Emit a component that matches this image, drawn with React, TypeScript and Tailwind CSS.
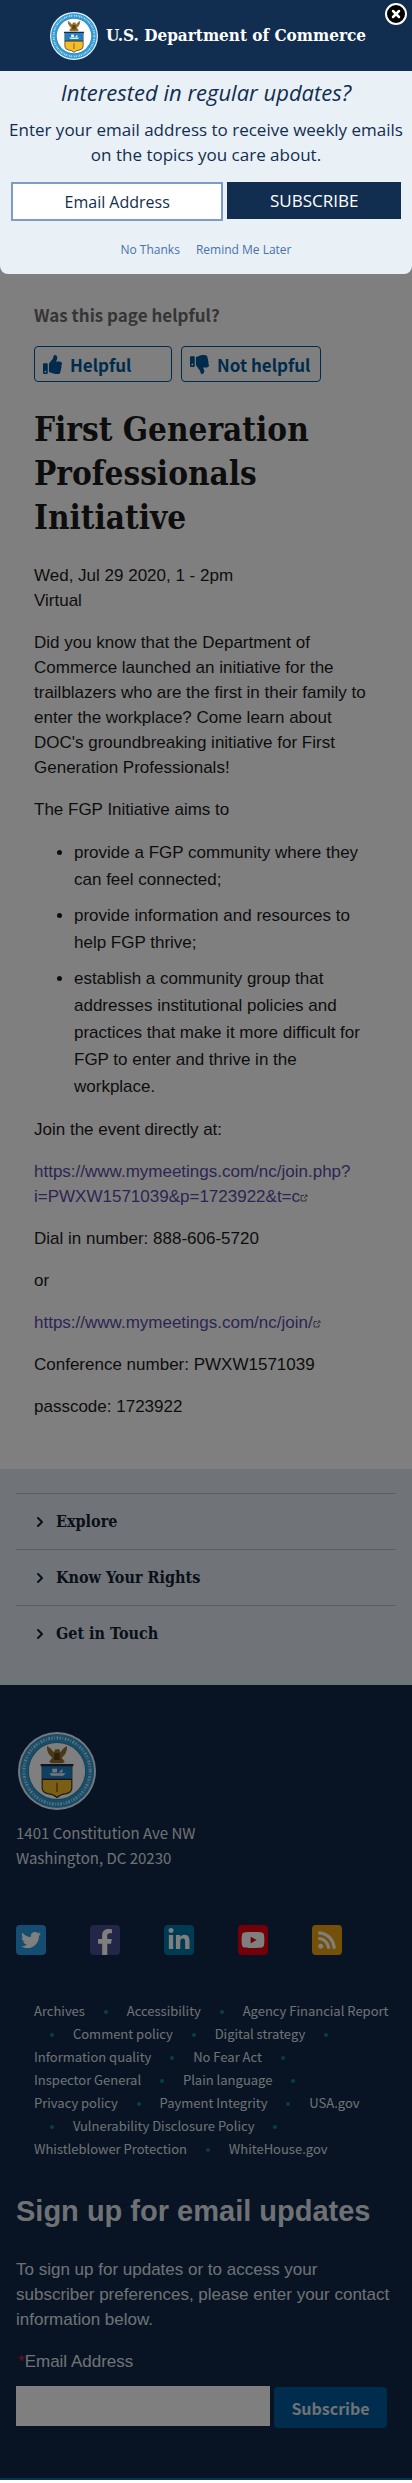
import type { ReactNode } from "react";
import { FaFacebookF, FaLinkedinIn, FaTwitter, FaYoutube, FaRss, FaThumbsUp, FaThumbsDown } from "react-icons/fa";
import { ChevronRight, X } from "lucide-react";

function Seal({ className }: { className: string }) {
  return (
    <svg viewBox="0 0 100 100" className={className} role="img" aria-label="Department of Commerce seal">
      <circle cx="50" cy="50" r="50" fill="#e6f2fb" />
      <circle cx="50" cy="50" r="47.5" fill="#2f9bd2" />
      <circle cx="50" cy="50" r="42.5" fill="none" stroke="#b4dcf2" strokeWidth="4" strokeDasharray="1.8 1.8 1.1 2 2.4 1.6" />
      <circle cx="50" cy="50" r="37" fill="#2b7fb4" />
      <circle cx="50" cy="50" r="36" fill="#ffffff" />
      <path d="M37 18 Q42 20 46 26 L48 22 L53 22 L54 26 Q58 20 63 18 Q63 26 59 30 L56 33 L60 38 L57 40 H43 L40 38 L44 33 L41 30 Q37 26 37 18 Z" fill="#94702c" />
      <path d="M47 27 H53 L54 36 H46 Z" fill="#5d4216" />
      <path d="M31 43 H69 V72 Q69 77 62 79 Q54 80 50 84 Q46 80 38 79 Q31 77 31 72 Z" fill="#f3bd27" stroke="#3b331c" strokeWidth="1.5" />
      <path d="M31 43 H69 V60 H31 Z" fill="#1f7fc4" />
      <path d="M29 41 H71 V44 H29 Z M31 59.5 H69 V61.5 H31 Z" fill="#1d2a3c" />
      <path d="M40 53 H61 L58 56 H43 Z M44 52 V47 H50 V52 Z M52 52 L57 47 V52 Z" fill="#e8f1f5" />
      <path d="M49 65 H51 V77 H49 Z" fill="#8d5f14" />
    </svg>
  );
}

const footerLinks = [
  "Archives",
  "Accessibility",
  "Agency Financial Report",
  "Comment policy",
  "Digital strategy",
  "Information quality",
  "No Fear Act",
  "Inspector General",
  "Plain language",
  "Privacy policy",
  "Payment Integrity",
  "USA.gov",
  "Vulnerability Disclosure Policy",
  "Whistleblower Protection",
  "WhiteHouse.gov",
];

const sections = ["Explore", "Know Your Rights", "Get in Touch"];

const social: { name: string; color: string; icon: ReactNode }[] = [
  { name: "Twitter", color: "bg-[#2a9be0]", icon: <FaTwitter className="size-5" /> },
  { name: "Facebook", color: "bg-[#454f90]", icon: <FaFacebookF className="mt-1 size-[26px]" /> },
  { name: "LinkedIn", color: "bg-[#0077a8]", icon: <FaLinkedinIn className="size-6" /> },
  { name: "YouTube", color: "bg-[#e60012]", icon: <FaYoutube className="size-6" /> },
  { name: "RSS", color: "bg-[#e8a010]", icon: <FaRss className="size-5" /> },
];

function MeetingLink({ children }: { children: ReactNode }) {
  return (
    <a href="#join" className="break-words text-[#5c4ba8]">
      {children}
      <svg viewBox="0 0 8 8" className="inline-block size-2 align-baseline" aria-hidden="true">
        <path d="M4 1.5 H1 V7 H6 V4.5 M5 1 H7 V3 M7 1 L4 4" fill="none" stroke="#66666e" strokeWidth="1" />
      </svg>
    </a>
  );
}

function UpdatesDialog() {
  return (
    <section
      role="dialog"
      aria-label="Email updates"
      className="absolute inset-x-0 top-0 overflow-hidden rounded-b-lg bg-[#e9f0f6] text-center font-['Open_Sans',sans-serif] text-[#112e51]"
    >
      <header className="flex h-[71px] items-center justify-center gap-2 bg-[#112e51] pl-1">
        <Seal className="size-12" />
        <span className="font-['DejaVu_Serif_Condensed','DejaVu_Serif',serif] text-[17px] font-bold text-white">
          U.S. Department of Commerce
        </span>
      </header>
      <button
        type="button"
        aria-label="Close"
        className="absolute top-[3px] right-[5px] grid size-[22px] place-items-center rounded-full border-2 border-white bg-black text-white"
      >
        <X className="size-3" strokeWidth={5} />
      </button>
      <h2 className="mt-[7px] text-[22px] leading-7 italic">Interested in regular updates?</h2>
      <p className="mt-[11px] px-1 text-[17px] leading-[25px]">
        Enter your email address to receive weekly emails on the topics you care about.
      </p>
      <form className="mt-[15px] flex gap-1 px-[11px]" onSubmit={(e) => e.preventDefault()}>
        <input
          type="email"
          aria-label="Email Address"
          placeholder="Email Address"
          className="h-[39px] w-0 grow-6 border-2 border-[#7d9cc8] bg-white text-center text-base placeholder:text-[#112e51]"
        />
        <button type="submit" className="h-[37px] w-0 grow-5 bg-[#112e51] text-[17px] text-white">
          SUBSCRIBE
        </button>
      </form>
      <p className="mt-5 flex justify-center gap-4 pb-[15px] text-xs leading-[18px] text-[#4773aa]">
        <a href="#no">No Thanks</a>
        <a href="#later">Remind Me Later</a>
      </p>
    </section>
  );
}

export default function App() {
  return (
    <div className="relative bg-white font-['Liberation_Sans',sans-serif] text-[17px] leading-[25px] text-[#1b1b1b]">
      <main className="px-[34px] pt-[302px] pb-[50px]">
        <p className="font-['Noto_Sans_CJK_SC',sans-serif] text-[17px] font-bold text-[#6b6b6b]">
          Was this page helpful?
        </p>
        <div className="mt-[19px] flex gap-[9px] font-['Noto_Sans_CJK_SC',sans-serif] text-[17px] font-bold text-[#00569a]">
          <button type="button" className="flex h-9 w-[138px] items-center gap-2 rounded-sm border border-[#00569a] px-2">
            <FaThumbsUp className="size-[19px]" />
            Helpful
          </button>
          <button type="button" className="flex h-9 w-[140px] items-center gap-2 rounded-sm border border-[#00569a] px-2 whitespace-nowrap">
            <FaThumbsDown className="size-[19px]" />
            Not helpful
          </button>
        </div>
        <h1 className="mt-[26px] font-['DejaVu_Serif_Condensed','DejaVu_Serif',serif] text-[33px] leading-[44px] font-bold">
          First Generation Professionals Initiative
        </h1>
        <p className="mt-[23px]">
          Wed, Jul 29 2020, 1 - 2pm
          <br />
          Virtual
        </p>
        <p className="mt-[17px]">
          Did you know that the Department of Commerce launched an initiative for the trailblazers who are the first in
          their family to enter the workplace? Come learn about DOC's groundbreaking initiative for First Generation
          Professionals!
        </p>
        <p className="mt-[17px]">The FGP Initiative aims to</p>
        <ul className="mt-[17px] list-disc space-y-[9px] pl-10 leading-[27px]">
          <li>provide a FGP community where they can feel connected;</li>
          <li>provide information and resources to help FGP thrive;</li>
          <li>
            establish a community group that addresses institutional policies and practices that make it more difficult
            for FGP to enter and thrive in the workplace.
          </li>
        </ul>
        <div className="mt-[17px] space-y-[17px]">
          <p>Join the event directly at:</p>
          <p>
            <MeetingLink>https://www.mymeetings.com/nc/join.php?i=PWXW1571039&amp;p=1723922&amp;t=c</MeetingLink>
          </p>
          <p>Dial in number: 888-606-5720</p>
          <p>or</p>
          <p>
            <MeetingLink>https://www.mymeetings.com/nc/join/</MeetingLink>
          </p>
          <p>Conference number: PWXW1571039</p>
          <p>passcode: 1723922</p>
        </div>
      </main>

      <nav aria-label="Site sections" className="border-b-[6px] border-[#d8eaea] bg-[#e1e8f2] px-4 pt-6 pb-[18px]">
        {sections.map((name) => (
          <a
            key={name}
            href="#section"
            className="flex h-14 items-center gap-2 border-t border-[#b5bdcc] px-4 font-['DejaVu_Serif_Condensed','DejaVu_Serif',serif] text-base font-bold text-[#112030]"
          >
            <ChevronRight className="size-4" strokeWidth={3} />
            {name}
          </a>
        ))}
      </nav>

      <footer className="border-b-2 border-[#0071a0] bg-[#102646] px-4 pt-[47px] pb-[50px] text-[#dfe3e8]">
        <Seal className="ml-0.5 size-[78px]" />
        <address className="mt-[10px] font-['Noto_Sans_CJK_SC',sans-serif] text-[15px] leading-[25px] not-italic">
          1401 Constitution Ave NW
          <br />
          Washington, DC 20230
        </address>
        <ul className="mt-[55px] flex gap-11">
          {social.map((s) => (
            <li key={s.name}>
              <a
                href="#social"
                aria-label={s.name}
                className={"grid size-[30px] place-items-center overflow-hidden rounded-sm text-white " + s.color}
              >
                {s.icon}
              </a>
            </li>
          ))}
        </ul>
        <p className="mt-11 pl-[18px] font-['Noto_Sans_CJK_SC',sans-serif] text-[13px] leading-[23px]">
          {footerLinks.map((name, i) => (
            <span key={name}>
              <a href="#link" className="whitespace-nowrap">
                {name}
              </a>
              {i < footerLinks.length - 1 && (
                <>
                  {" "}
                  <span aria-hidden="true" className="mx-4 inline-block size-1 rounded-full bg-[#0f7f8c] align-middle" />{" "}
                </>
              )}
            </span>
          ))}
        </p>
        <h2 className="mt-[34px] text-[29px] leading-[34px] font-bold">Sign up for email updates</h2>
        <p className="mt-[29px]">
          To sign up for updates or to access your subscriber preferences, please enter your contact information below.
        </p>
        <form className="mt-[17px]" onSubmit={(e) => e.preventDefault()}>
          <label htmlFor="email" className="block">
            <span className="pl-[2px] text-[#e31c3d]">*</span>
            Email Address
          </label>
          <div className="mt-3 flex gap-1">
            <input id="email" type="email" className="h-10 w-[254px] bg-white px-2 text-black" />
            <button
              type="submit"
              className="mt-px h-[41px] w-[113px] rounded-sm bg-[#005a9c] font-['Noto_Sans_CJK_SC',sans-serif] text-base font-bold"
            >
              Subscribe
            </button>
          </div>
        </form>
      </footer>

      <div className="absolute inset-0 bg-black/50" />
      <UpdatesDialog />
    </div>
  );
}
